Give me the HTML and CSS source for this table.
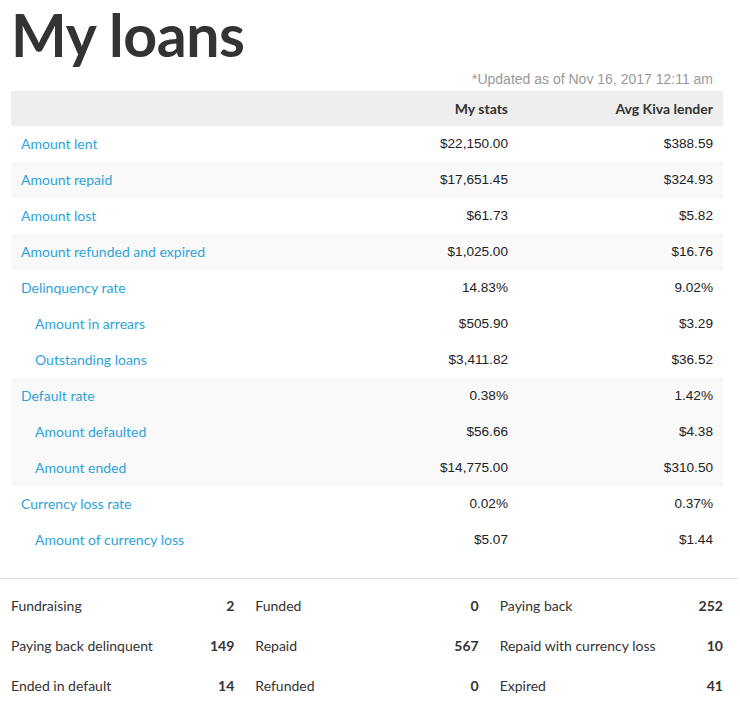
FILE: index.html
```html
<!DOCTYPE html>
<html>
<head>
<meta charset="utf-8">
<link rel="stylesheet" href="styles.css">
</head>
<body>
<div class="page">
  <h1 class="title">My loans</h1>
  <div class="updated">*Updated as of Nov 16, 2017 12:11 am</div>
  <table class="stats">
    <thead>
      <tr><th class="lbl"></th><th class="num">My stats</th><th class="num">Avg Kiva lender</th></tr>
    </thead>
    <tbody>
      <tr><td class="lbl"><a>Amount lent</a></td><td class="num">$22,150.00</td><td class="num">$388.59</td></tr>
      <tr class="alt"><td class="lbl"><a>Amount repaid</a></td><td class="num">$17,651.45</td><td class="num">$324.93</td></tr>
      <tr><td class="lbl"><a>Amount lost</a></td><td class="num">$61.73</td><td class="num">$5.82</td></tr>
      <tr class="alt"><td class="lbl"><a>Amount refunded and expired</a></td><td class="num">$1,025.00</td><td class="num">$16.76</td></tr>
      <tr><td class="lbl"><a>Delinquency rate</a></td><td class="num">14.83%</td><td class="num">9.02%</td></tr>
      <tr><td class="lbl sub"><a>Amount in arrears</a></td><td class="num">$505.90</td><td class="num">$3.29</td></tr>
      <tr><td class="lbl sub"><a>Outstanding loans</a></td><td class="num">$3,411.82</td><td class="num">$36.52</td></tr>
      <tr class="alt"><td class="lbl"><a>Default rate</a></td><td class="num">0.38%</td><td class="num">1.42%</td></tr>
      <tr class="alt"><td class="lbl sub"><a>Amount defaulted</a></td><td class="num">$56.66</td><td class="num">$4.38</td></tr>
      <tr class="alt"><td class="lbl sub"><a>Amount ended</a></td><td class="num">$14,775.00</td><td class="num">$310.50</td></tr>
      <tr><td class="lbl"><a>Currency loss rate</a></td><td class="num">0.02%</td><td class="num">0.37%</td></tr>
      <tr><td class="lbl sub"><a>Amount of currency loss</a></td><td class="num">$5.07</td><td class="num">$1.44</td></tr>
    </tbody>
  </table>
</div>
<hr class="divider">
<div class="counts">
  <div class="count"><span class="c-lbl">Fundraising</span><span class="c-num">2</span></div>
  <div class="count"><span class="c-lbl">Funded</span><span class="c-num">0</span></div>
  <div class="count"><span class="c-lbl">Paying back</span><span class="c-num">252</span></div>
  <div class="count"><span class="c-lbl">Paying back delinquent</span><span class="c-num">149</span></div>
  <div class="count"><span class="c-lbl">Repaid</span><span class="c-num">567</span></div>
  <div class="count"><span class="c-lbl">Repaid with currency loss</span><span class="c-num">10</span></div>
  <div class="count"><span class="c-lbl">Ended in default</span><span class="c-num">14</span></div>
  <div class="count"><span class="c-lbl">Refunded</span><span class="c-num">0</span></div>
  <div class="count"><span class="c-lbl">Expired</span><span class="c-num">41</span></div>
</div>
</body>
</html>
```
FILE: styles.css
```css
html, body {
  margin: 0;
  padding: 0;
  background: #fff;
}
body {
  font-family: Lato, "Liberation Sans", sans-serif;
  color: #333;
}
.page {
  padding: 0 17px 0 11px;
}
.title {
  margin: 0;
  padding-top: 2px;
  font-size: 59px;
  line-height: 66px;
  font-weight: 700;
  color: #333;
  letter-spacing: -0.4px;
}
.updated {
  text-align: right;
  font-family: "Liberation Sans", Arial, sans-serif;
  font-size: 14px;
  color: #999;
  padding-right: 10px;
  height: 23px;
  line-height: 23px;
}
.stats {
  width: 100%;
  border-collapse: collapse;
}
.stats th {
  background: #eee;
  height: 35px;
  font-size: 14px;
  font-weight: 700;
  color: #333;
  padding: 0 10px;
}
.stats td {
  box-sizing: border-box;
  height: 36px;
  padding: 0 10px 2px;
  font-size: 14px;
}
.stats tr.alt td {
  background: #f9f9f9;
}
.stats .lbl {
  text-align: left;
}
.stats .lbl a {
  color: #2ea3d9;
}
.stats .lbl.sub {
  padding-left: 24px;
}
.stats .num {
  text-align: right;
}
.stats td.num {
  font-family: "Liberation Sans", Arial, sans-serif;
  font-size: 13.6px;
  color: #222;
  padding-bottom: 1px;
}
.stats th:nth-child(2), .stats td:nth-child(2) {
  width: 185px;
}
.stats th:nth-child(3), .stats td:nth-child(3) {
  width: 185px;
}
.divider {
  margin: 20px 2px 0 0;
  border: 0;
  border-top: 1px solid #ddd;
  height: 0;
}
.counts {
  display: grid;
  grid-template-columns: repeat(3, 1fr);
  column-gap: 21px;
  padding: 6px 17px 0 11px;
}
.count {
  display: flex;
  justify-content: space-between;
  align-items: center;
  height: 40px;
  font-size: 14px;
}
.c-lbl {
  color: #333;
}
.c-num {
  font-weight: 700;
  color: #333;
}
```
